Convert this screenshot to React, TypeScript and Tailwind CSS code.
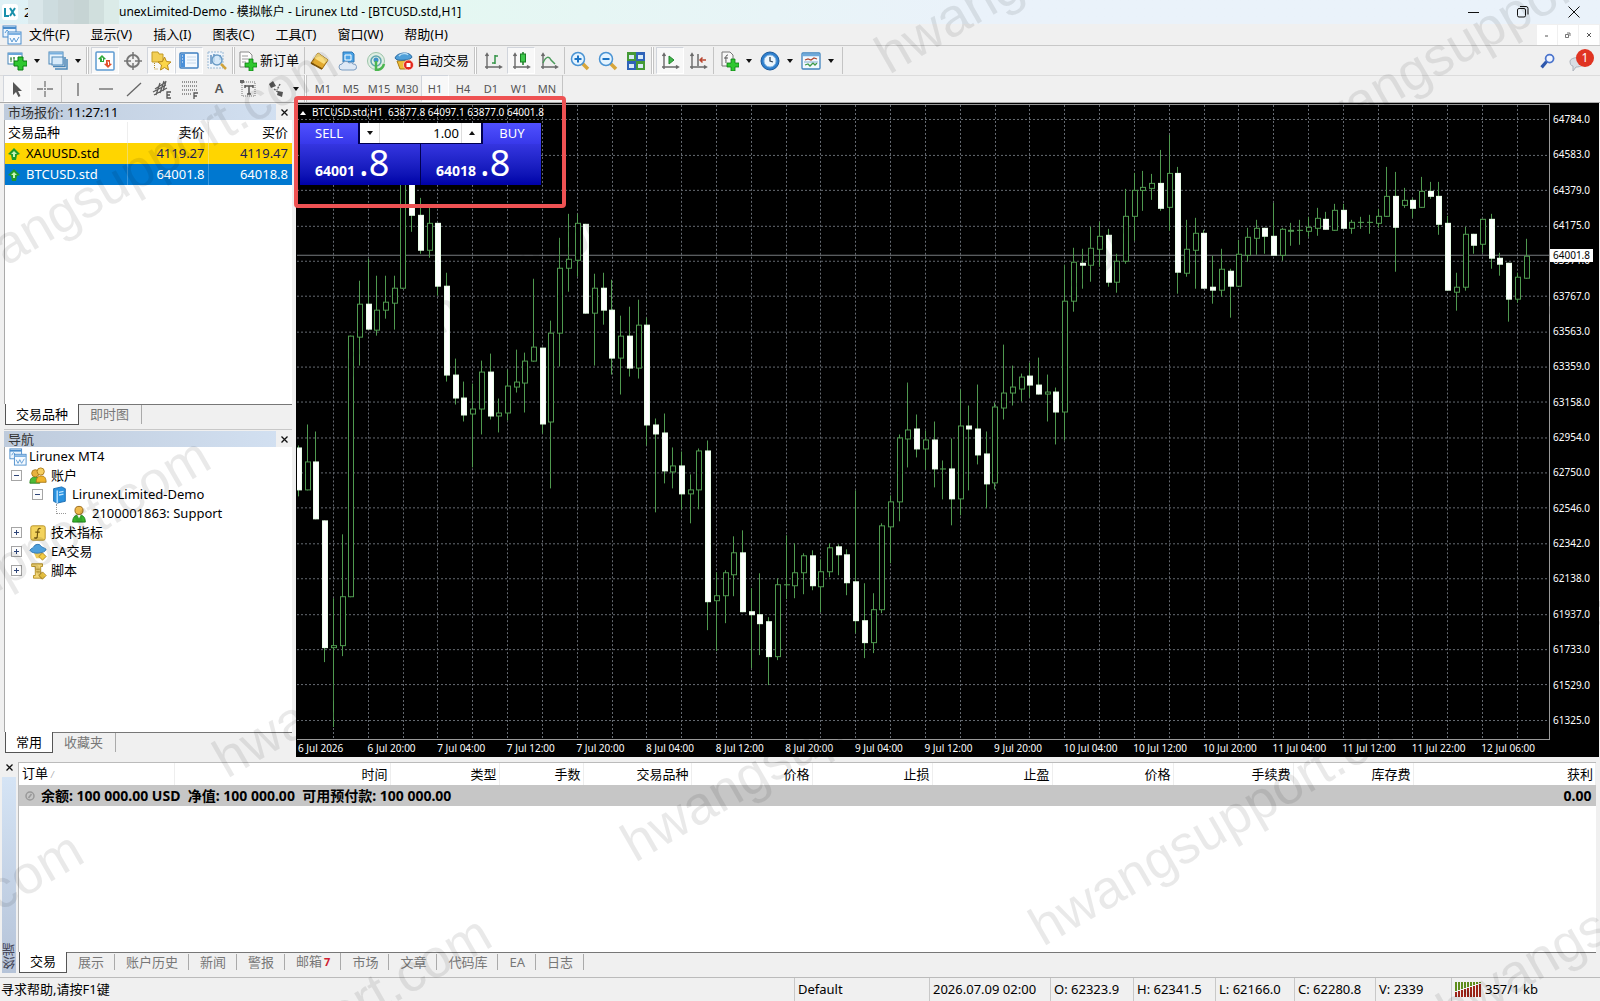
import { useState } from 'react';
import type { ReactNode } from 'react';

// [high, body top, body bottom, low, filled]
type Candle = [number, number, number, number, 0 | 1];

const candles: Candle[] = [
  [445, 447, 489, 495, 1], [424, 461, 489, 489, 0], [431, 461, 518, 518, 1], [520, 520, 647, 661, 1],
  [598, 645, 647, 726, 0], [534, 596, 645, 655, 0], [335, 335, 596, 596, 0], [280, 303, 336, 364, 0],
  [258, 303, 328, 328, 1], [275, 309, 329, 334, 0], [275, 301, 309, 317, 0], [275, 287, 302, 328, 0],
  [150, 150, 287, 287, 0], [150, 150, 214, 230, 1], [197, 214, 249, 252, 1], [205, 222, 249, 256, 0],
  [222, 222, 285, 294, 1], [272, 285, 374, 380, 1], [358, 374, 397, 403, 1], [381, 397, 414, 420, 1],
  [383, 408, 413, 466, 0], [360, 371, 408, 433, 0], [353, 371, 415, 418, 1], [398, 412, 415, 431, 0],
  [369, 385, 412, 419, 0], [349, 381, 386, 391, 0], [352, 360, 382, 411, 0], [278, 346, 360, 360, 0],
  [347, 347, 423, 432, 1], [320, 332, 421, 487, 0], [237, 267, 332, 365, 0], [213, 258, 267, 290, 0],
  [213, 222, 259, 275, 0], [223, 223, 312, 312, 1], [273, 287, 312, 364, 0], [272, 287, 309, 323, 1],
  [279, 309, 357, 373, 1], [315, 335, 357, 393, 0], [306, 335, 367, 375, 1], [299, 324, 367, 377, 0],
  [317, 324, 424, 444, 1], [418, 424, 433, 511, 1], [413, 432, 470, 482, 1], [447, 465, 471, 487, 0],
  [451, 465, 493, 508, 1], [474, 489, 493, 522, 0], [448, 450, 489, 508, 0], [440, 450, 601, 629, 1],
  [572, 595, 600, 650, 0], [570, 572, 595, 622, 0], [536, 552, 574, 595, 0], [530, 552, 611, 611, 1],
  [588, 611, 614, 667, 1], [573, 614, 623, 654, 1], [617, 621, 656, 684, 1], [578, 584, 656, 659, 0],
  [535, 584, 584, 598, 0], [543, 572, 585, 597, 0], [553, 555, 572, 593, 0], [550, 555, 585, 589, 1],
  [559, 571, 586, 611, 0], [543, 547, 571, 576, 0], [544, 546, 554, 574, 1], [549, 554, 582, 594, 1],
  [490, 581, 620, 632, 1], [583, 620, 642, 657, 1], [593, 609, 642, 652, 0], [523, 525, 609, 612, 0],
  [495, 501, 526, 562, 0], [434, 437, 501, 520, 0], [382, 429, 438, 466, 0], [414, 428, 448, 456, 1],
  [430, 439, 448, 468, 0], [421, 439, 468, 486, 1], [460, 468, 468, 498, 0], [438, 468, 498, 524, 1],
  [389, 425, 498, 514, 0], [405, 425, 428, 489, 1], [384, 428, 454, 463, 1], [431, 453, 483, 507, 1],
  [402, 406, 482, 488, 0], [344, 392, 407, 418, 0], [365, 386, 392, 404, 0], [373, 376, 388, 400, 0],
  [362, 375, 384, 396, 1], [357, 384, 393, 393, 1], [374, 391, 393, 420, 0], [387, 391, 411, 443, 1],
  [264, 300, 411, 439, 0], [247, 261, 300, 310, 0], [248, 262, 264, 287, 1], [226, 247, 264, 280, 0],
  [221, 235, 248, 265, 0], [228, 234, 281, 285, 1], [253, 260, 281, 291, 0], [188, 215, 260, 262, 0],
  [172, 189, 215, 239, 0], [170, 186, 189, 209, 0], [173, 182, 187, 198, 0], [149, 182, 207, 209, 1],
  [134, 172, 206, 229, 0], [166, 172, 271, 292, 1], [219, 248, 272, 275, 0], [217, 232, 249, 287, 0],
  [229, 232, 287, 287, 1], [255, 286, 289, 302, 1], [248, 268, 289, 295, 0], [268, 270, 285, 316, 1],
  [239, 253, 285, 285, 0], [227, 236, 254, 260, 0], [219, 227, 237, 253, 0], [227, 227, 235, 252, 1],
  [202, 235, 254, 254, 1], [227, 228, 254, 259, 0], [222, 229, 230, 244, 0], [219, 229, 229, 243, 0],
  [216, 226, 230, 235, 0], [207, 217, 227, 234, 0], [211, 218, 228, 228, 1], [203, 209, 229, 229, 0],
  [203, 209, 227, 227, 1], [219, 221, 227, 232, 0], [216, 221, 221, 227, 0], [214, 221, 221, 232, 0],
  [208, 215, 222, 226, 0], [166, 195, 215, 215, 0], [171, 195, 226, 270, 1], [187, 199, 204, 206, 0],
  [197, 199, 207, 216, 1], [176, 190, 206, 206, 0], [181, 190, 195, 197, 1], [181, 195, 223, 233, 1],
  [215, 222, 289, 289, 1], [272, 286, 291, 309, 0], [226, 233, 286, 289, 0], [233, 233, 244, 252, 1],
  [218, 218, 243, 251, 0], [213, 218, 257, 267, 1], [252, 257, 263, 274, 1], [262, 262, 298, 320, 1],
  [272, 276, 298, 301, 0], [238, 255, 277, 277, 0],
];

const prices = [
  '64784.0', '64583.0', '64379.0', '64175.0', '63971.0', '63767.0', '63563.0', '63359.0', '63158.0',
  '62954.0', '62750.0', '62546.0', '62342.0', '62138.0', '61937.0', '61733.0', '61529.0', '61325.0',
];

const dates = [
  '6 Jul 2026', '6 Jul 20:00', '7 Jul 04:00', '7 Jul 12:00', '7 Jul 20:00', '8 Jul 04:00', '8 Jul 12:00',
  '8 Jul 20:00', '9 Jul 04:00', '9 Jul 12:00', '9 Jul 20:00', '10 Jul 04:00', '10 Jul 12:00',
  '10 Jul 20:00', '11 Jul 04:00', '11 Jul 12:00', '11 Jul 22:00', '12 Jul 06:00',
];

const menus = ['文件(F)', '显示(V)', '插入(I)', '图表(C)', '工具(T)', '窗口(W)', '帮助(H)'];
const frames = ['M1', 'M5', 'M15', 'M30', 'H1', 'H4', 'D1', 'W1', 'MN'];
const terminalTabs = ['交易', '展示', '账户历史', '新闻', '警报', '邮箱', '市场', '文章', '代码库', 'EA', '日志'];

const orderColumns = [
  { label: '订单', width: 'w-[155px]' },
  { label: '时间', width: 'w-[216px]' },
  { label: '类型', width: 'w-[109px]' },
  { label: '手数', width: 'w-[84px]' },
  { label: '交易品种', width: 'w-[108px]' },
  { label: '价格', width: 'w-[121px]' },
  { label: '止损', width: 'w-[120px]' },
  { label: '止盈', width: 'w-[120px]' },
  { label: '价格', width: 'w-[121px]' },
  { label: '手续费', width: 'w-[120px]' },
  { label: '库存费', width: 'w-[120px]' },
  { label: '获利', width: '' },
];

function Icon({ children, size = 'h-5 w-5' }: { children: ReactNode; size?: string }) {
  return (
    <svg viewBox="0 0 20 20" className={`${size} shrink-0`} fill="none" aria-hidden="true">
      {children}
    </svg>
  );
}

function Plus() {
  return <path d="M12 8h4v4h4v4h-4v4h-4v-4H8v-4h4z" fill="#2fc72f" stroke="#0a7d12" strokeWidth="0.8" />;
}

function Axes() {
  return (
    <path
      d="M4 3v15M2 16h16M2.500 5 4 2.500 5.500 5M16 14.500l2.500 1.500-2.500 1.500"
      stroke="#6a6a6a"
      strokeWidth="1.400"
    />
  );
}

function WindowsIcon() {
  return (
    <Icon>
      <rect x="1" y="1" width="13" height="11" fill="#eaf4fd" stroke="#4a8ccb" />
      <path d="M1 3h13" stroke="#4a8ccb" strokeWidth="2" />
      <rect x="6" y="7" width="13" height="12" fill="#f5faff" stroke="#4a8ccb" />
      <path d="M6 9h13" stroke="#7cb1e2" strokeWidth="2" />
      <path d="m8 13 2 4 2-4 2 4 3-5M3 8l2-3 2 2" stroke="#5c9bd4" />
    </Icon>
  );
}

const icons: Record<string, ReactNode> = {
  newChart: (
    <Icon>
      <rect x="1" y="2" width="14" height="11" fill="#fff" stroke="#4a86b8" />
      <path d="M1 3h14" stroke="#69a5d8" strokeWidth="2" />
      <path d="M4 6v5M3 8h2M7 6v4M6 7h2" stroke="#398a3f" />
      <path d="M11 6h5v4h4v5h-4v4h-5v-4H7v-5h4z" fill="#2fc72f" stroke="#0a7d12" />
    </Icon>
  ),
  profiles: (
    <Icon>
      <rect x="1" y="1" width="14" height="12" fill="#e9f4fd" stroke="#4a86b8" />
      <path d="M1 2.500h14" stroke="#79b0de" strokeWidth="2" />
      <path d="M7 18h12V8M5 15.500h12V6" stroke="#4a86b8" strokeWidth="1.500" />
      <rect x="4" y="6" width="11" height="8" fill="#d8ebfa" stroke="#4a86b8" />
    </Icon>
  ),
  market: (
    <Icon>
      <rect x="1" y="1" width="18" height="18" rx="1" fill="#fdfeff" stroke="#5d9bd1" strokeWidth="1.500" />
      <path d="m7 4 4 4-2 .5V11H5V8.500L3 8z" fill="#2ea83a" />
      <path d="m13 17-4-4 2-.5V9h4v3.500l2 .5z" fill="#e2502c" />
      <path d="M6.500 7h1v3M12.500 11h1v3" stroke="#fff" />
    </Icon>
  ),
  target: (
    <Icon>
      <circle cx="10" cy="10" r="6" stroke="#777" strokeWidth="2" />
      <path d="M10 1v7M10 12v7M1 10h7M12 10h7" stroke="#777" strokeWidth="1.500" />
    </Icon>
  ),
  favorites: (
    <Icon>
      <path d="M1 3V1h6l1 2h4v8H1z" fill="#f3cf55" stroke="#c29b26" />
      <path d="M3.500 12v6h4" stroke="#b0881e" strokeDasharray="1 1" />
      <path d="m13.500 6 2 4.500 4.500.5-3.500 3 1 5-4-2.500-4 2.500 1-5L7 11l4.500-.5z" fill="#fcd648" stroke="#b8891a" />
    </Icon>
  ),
  navigator: (
    <Icon>
      <rect x="1" y="2" width="18" height="15" rx="1" fill="#f3f9ff" stroke="#3f7fc0" strokeWidth="1.500" />
      <rect x="2" y="3" width="4" height="13" fill="#4a90d9" />
      <path d="M3 5h1M3 8h1M3 11h1" stroke="#fff" />
      <path d="M8 6h9M8 9h9M8 12h9" stroke="#c6d8ea" />
    </Icon>
  ),
  tester: (
    <Icon>
      <rect x="1" y="1" width="15" height="16" fill="#eef5fc" stroke="#9ab8d3" strokeDasharray="2 1" />
      <path d="M4 4v9M7 3v8M13 4v5" stroke="#5f8fc0" strokeWidth="1.500" />
      <circle cx="10" cy="9" r="5" fill="#cfe6f8" fillOpacity="0.800" stroke="#6b9cc6" strokeWidth="1.500" />
      <path d="m14 13 5 5" stroke="#d1a33a" strokeWidth="2.500" />
    </Icon>
  ),
  order: (
    <Icon>
      <path d="M3 1h9l3 3v12H3z" fill="#fdfdfd" stroke="#8b8b8b" />
      <path d="M5 5h6M5 8h7M5 11h4" stroke="#9b9b9b" />
      <Plus />
    </Icon>
  ),
  gold: (
    <Icon>
      <path d="m8 2 10 7-6 9L1 12z" fill="#e2a92f" stroke="#9b6b12" />
      <path d="m8 2 10 7-4 4-10-6z" fill="#f9dc7d" />
      <path d="m1 12 11 6" stroke="#7d540a" strokeWidth="1.500" />
    </Icon>
  ),
  cloud: (
    <Icon>
      <path d="M5 1h9l2 2v8H5z" fill="#4ba3e6" stroke="#2c76b5" />
      <path d="M7 4h6v5H7z" stroke="#fff" />
      <path d="M4 19a3 3 0 0 1 0-6 4 4 0 0 1 7-1 3 3 0 0 1 4 1 3 3 0 0 1 1 6z" fill="#dfe9f5" stroke="#7b9cc0" />
    </Icon>
  ),
  signal: (
    <Icon>
      <circle cx="10" cy="10" r="8.500" fill="#dfeee3" stroke="#9cc4a9" />
      <circle cx="10" cy="10" r="5" stroke="#5fa5ac" strokeWidth="1.500" />
      <circle cx="10" cy="9" r="2.500" fill="#3f91c8" />
      <path d="M10 10v9c4 0 7-2 8-6" stroke="#4bb64f" strokeWidth="2.500" />
    </Icon>
  ),
  auto: (
    <Icon>
      <path d="m3 10 13-1-3 9H6z" fill="#edbd37" stroke="#a87b14" />
      <path d="M1 7c2-6 15-7 17-1 0 3-16 5-17 1z" fill="#4f9fd8" stroke="#2b6ba3" />
      <path d="M5 5c2-3 8-3 9-1" stroke="#b6dcf5" strokeWidth="1.500" />
      <circle cx="14.500" cy="14" r="5" fill="#e3281d" stroke="#fff" strokeWidth="0.600" />
      <rect x="12.500" y="12" width="4" height="4" fill="#fff" />
    </Icon>
  ),
  bars: (
    <Icon>
      <Axes />
      <path d="M12 4v9M12 5h3M9 12h3" stroke="#339447" strokeWidth="1.500" />
    </Icon>
  ),
  candle: (
    <Icon>
      <Axes />
      <path d="M12 1v13" stroke="#187d23" strokeWidth="1.500" />
      <rect x="9.500" y="3" width="5" height="8" fill="#3dc84b" stroke="#187d23" />
    </Icon>
  ),
  line: (
    <Icon>
      <Axes />
      <path d="M4 12c3-7 6-7 8-3l4 4" stroke="#4a9a5a" strokeWidth="1.500" />
    </Icon>
  ),
  zoomIn: (
    <Icon>
      <path d="m12 12 6 6" stroke="#d8a63a" strokeWidth="3.500" />
      <circle cx="8" cy="8" r="6.500" fill="#e5f4ff" stroke="#4a93d3" strokeWidth="1.500" />
      <path d="M4.500 8h7M8 4.500v7" stroke="#1c73c4" strokeWidth="2" />
    </Icon>
  ),
  zoomOut: (
    <Icon>
      <path d="m12 12 6 6" stroke="#d8a63a" strokeWidth="3.500" />
      <circle cx="8" cy="8" r="6.500" fill="#e5f4ff" stroke="#4a93d3" strokeWidth="1.500" />
      <path d="M4.500 8h7" stroke="#1c73c4" strokeWidth="2" />
    </Icon>
  ),
  tile: (
    <Icon>
      <path d="M1 1h9v9H1zM10 10h9v9h-9z" fill="#459a36" />
      <path d="M10 1h9v9h-9zM1 10h9v9H1z" fill="#2f63b8" />
      <path d="M3 4h5v4H3zM12 4h5v4h-5zM3 13h5v4H3zM12 13h5v4h-5z" fill="#d7ebf7" />
    </Icon>
  ),
  scroll: (
    <Icon>
      <Axes />
      <path d="m9 5 5 4-5 4z" fill="#3fb54a" stroke="#23852d" />
    </Icon>
  ),
  shift: (
    <Icon>
      <Axes />
      <path d="M10 3v12" stroke="#6a6a6a" strokeWidth="1.500" />
      <path d="M18 9h-6M14.500 6.500 12 9l2.500 2.500" stroke="#b9452f" strokeWidth="1.500" />
    </Icon>
  ),
  indicators: (
    <Icon>
      <path d="M3 1h8l3 3v11H3z" fill="#f7f7f7" stroke="#777" />
      <path d="M9 4c-3 0-2 3-2 8M5 7h4" stroke="#555" />
      <Plus />
    </Icon>
  ),
  clock: (
    <Icon>
      <circle cx="10" cy="10" r="9" fill="#2e7fce" stroke="#1b5a9b" />
      <circle cx="10" cy="10" r="6" fill="#edf6fd" stroke="#8bbbe3" />
      <path d="M10 6v4l3 1" stroke="#345" strokeWidth="1.300" />
    </Icon>
  ),
  template: (
    <Icon>
      <rect x="1" y="2" width="18" height="16" rx="1" fill="#f2f9ff" stroke="#3f83bd" strokeWidth="1.300" />
      <path d="M1 4h18" stroke="#6faadb" strokeWidth="2.500" />
      <path d="m4 9 3-1 3 1 3-2 3 1" stroke="#b0472f" strokeWidth="1.300" />
      <path d="m4 14 3-1 2 2 3-3 2 2 2-2" stroke="#3f9a4c" strokeWidth="1.300" />
      <path d="M3 11h14" stroke="#86afd1" />
    </Icon>
  ),
  pointer: (
    <Icon>
      <path d="M6 3v13l3-3 2.500 5 2-1-2.500-5h4z" fill="#555" />
    </Icon>
  ),
  cross: (
    <Icon>
      <path d="M10 2v6M10 12v6M2 10h6M12 10h6M9 10h2" stroke="#777" strokeWidth="1.300" />
    </Icon>
  ),
  vline: (
    <Icon>
      <path d="M10 4v13" stroke="#666" strokeWidth="1.300" />
    </Icon>
  ),
  hline: (
    <Icon>
      <path d="M3 10h14" stroke="#666" strokeWidth="1.300" />
    </Icon>
  ),
  trend: (
    <Icon>
      <path d="M3 17 17 4" stroke="#666" strokeWidth="1.300" />
    </Icon>
  ),
  channel: (
    <Icon>
      <path d="m1 13 13-7M2 16l13-7M3 10l11-7M4 16 8 4M8 14l4-12M11 12l3-10" stroke="#5c5c5c" strokeWidth="1.300" />
      <path d="M19 13h-4v6h4M15 16h3" stroke="#555" strokeWidth="1.300" />
    </Icon>
  ),
  fibo: (
    <Icon>
      <path d="M2 3h15M2 7h15M2 11h15M2 15h9" stroke="#777" strokeDasharray="1 1" strokeWidth="1.300" />
      <path d="M14 20v-6h4M14 17h3" stroke="#555" strokeWidth="1.300" />
    </Icon>
  ),
  label: (
    <Icon>
      <rect x="4" y="3" width="13" height="14" stroke="#777" strokeDasharray="1 1" />
      <path d="M7 7h8M11 7v8M7 6v3M15 6v3M9 15h4" stroke="#555" strokeWidth="1.500" />
      <path d="M2 1h4v3H2z" fill="#666" />
    </Icon>
  ),
  arrows: (
    <Icon>
      <path d="M3 5 7 2l3 5-5 2zM12 12l5 1-1 5-5-2z" fill="#555" />
      <path d="m8 10 4 3M14 5l-3 6" stroke="#666" strokeDasharray="2 1" strokeWidth="1.500" />
    </Icon>
  ),
};

function Tool({ name, label, active = false }: { name: string; label: string; active?: boolean }) {
  return (
    <button
      aria-label={label}
      className={`flex h-[27px] w-7 shrink-0 items-center justify-center ${
        active ? 'border border-gray-300 border-r-white border-b-white bg-[#f8f8f8]' : ''
      }`}
    >
      {icons[name]}
    </button>
  );
}

function Drop({ label }: { label: string }) {
  return (
    <button aria-label={label} className="mr-0.5 flex h-[27px] w-[11px] shrink-0 items-center justify-center">
      <svg viewBox="0 0 6 4" className="h-1 w-1.5" aria-hidden="true">
        <path d="M0 0h6L3 4z" fill="#111" />
      </svg>
    </button>
  );
}

function Sep() {
  return <span className="mx-px h-[27px] w-px shrink-0 bg-[#c4c4c4]" />;
}

function Grip() {
  return <span className="mr-0.5 ml-px h-[27px] w-[3px] shrink-0 border-x border-[#c4c4c4] bg-white" />;
}

function TitleBar() {
  return (
    <header className="flex h-6 items-center bg-linear-to-r from-[#dff1f6] via-[#e4f8f1] via-25% to-[#eaf2fa] to-60%">
      <svg viewBox="0 0 16 16" className="ml-0.5 h-4 w-4" aria-hidden="true">
        <rect width="16" height="16" rx="3" fill="#fff" />
        <path d="M3 4v8h4M8 4l5 8M13 4l-5 8" stroke="#1a90ab" strokeWidth="2" fill="none" />
      </svg>
      <span className="ml-1.5 w-1 overflow-hidden">2</span>
      <span className="grid h-6 w-[91px] grid-cols-6">
        <span className="bg-[#d9e6e9]" />
        <span className="bg-[#cddcdf]" />
        <span className="bg-[#c9d6d8]" />
        <span className="bg-[#c6d4d4]" />
        <span className="bg-[#d0dfdd]" />
        <span className="bg-[#dbebe8]" />
      </span>
      <h1 className="text-xs whitespace-pre">unexLimited-Demo - 模拟帐户 - Lirunex Ltd - [BTCUSD.std,H1]</h1>
      <div className="ml-auto flex">
        <button aria-label="最小化" className="flex h-6 w-[50px] items-center justify-center">
          <svg viewBox="0 0 12 12" className="h-3 w-3" stroke="#111" fill="none">
            <path d="M1 6.500h11" />
          </svg>
        </button>
        <button aria-label="还原" className="flex h-6 w-[50px] items-center justify-center">
          <svg viewBox="0 0 12 12" className="h-3 w-3" stroke="#111" fill="none">
            <rect x="0.500" y="2.500" width="8" height="8.500" rx="1.500" />
            <path d="M3 .5h6a2 2 0 0 1 2 2v6" />
          </svg>
        </button>
        <button aria-label="关闭" className="flex h-6 w-[52px] items-center justify-center">
          <svg viewBox="0 0 12 12" className="h-3 w-3" stroke="#111" fill="none">
            <path d="m.5.5 11 11M11.500.5l-11 11" />
          </svg>
        </button>
      </div>
    </header>
  );
}

function MenuBar() {
  return (
    <nav className="flex h-[22px] items-center border-b border-[#c8c8c8] pl-0.5">
      <WindowsIcon />
      <div className="ml-[7px] flex gap-[21px]">
        {menus.map((menu) => (
          <button key={menu}>{menu}</button>
        ))}
      </div>
      <div className="ml-auto flex gap-px pr-px">
        <button aria-label="最小化图表" className="flex h-5 w-5 items-center justify-center bg-white text-[#555]">
          <svg viewBox="0 0 6 6" className="h-1.5 w-1.5" stroke="currentColor"><path d="M1 4h3" /></svg>
        </button>
        <button aria-label="还原图表" className="flex h-5 w-5 items-center justify-center bg-white text-[#555]">
          <svg viewBox="0 0 6 6" className="h-1.5 w-1.5" stroke="currentColor" fill="none" strokeWidth="0.800">
            <path d="M.5 2.500h3v3h-3zM2 1h3v3" />
          </svg>
        </button>
        <button aria-label="关闭图表" className="flex h-5 w-5 items-center justify-center bg-white text-[#555]">
          <svg viewBox="0 0 6 6" className="h-1.5 w-1.5" stroke="currentColor"><path d="m1 1 4 4M5 1 1 5" /></svg>
        </button>
      </div>
    </nav>
  );
}

function Toolbars() {
  const [frame, setFrame] = useState('H1');

  return (
    <div className="border-b border-[#aaa] pb-px">
      <div className="flex h-[29px] items-center pl-[3px]">
        <Tool name="newChart" label="新图表" />
        <Drop label="新图表选项" />
        <Tool name="profiles" label="配置文件" />
        <Drop label="配置文件选项" />
        <Grip />
        <Tool name="market" label="市场报价" active />
        <Tool name="target" label="数据窗口" />
        <Tool name="favorites" label="导航" active />
        <Tool name="navigator" label="终端" active />
        <Tool name="tester" label="策略测试" />
        <Grip />
        <button className="flex h-[27px] items-center gap-[3px] whitespace-nowrap pr-1">
          {icons.order}
          新订单
        </button>
        <Sep />
        <Tool name="gold" label="MetaEditor" />
        <Tool name="cloud" label="VPS" />
        <Tool name="signal" label="信号" />
        <button className="flex h-[27px] items-center gap-[3px] whitespace-nowrap px-1">
          {icons.auto}
          自动交易
        </button>
        <Grip />
        <Tool name="bars" label="柱状图" />
        <Tool name="candle" label="蜡烛图" active />
        <Tool name="line" label="折线图" />
        <Sep />
        <Tool name="zoomIn" label="放大" />
        <Tool name="zoomOut" label="缩小" />
        <Tool name="tile" label="平铺窗口" />
        <Grip />
        <Tool name="scroll" label="自动滚动" active />
        <Tool name="shift" label="图表平移" />
        <Sep />
        <Tool name="indicators" label="技术指标" />
        <Drop label="技术指标选项" />
        <Tool name="clock" label="时间周期" />
        <Drop label="时间周期选项" />
        <Tool name="template" label="模板" />
        <Drop label="模板选项" />
        <span className="ml-1 h-[27px] w-px bg-[#c4c4c4]" />
        <div className="ml-auto flex items-center gap-3 pr-1.5">
          <button aria-label="搜索">
            <Icon size="h-4 w-4">
              <circle cx="12" cy="7" r="5" stroke="#4b74cc" strokeWidth="2.200" fill="#f0f5ff" />
              <path d="m8 11-6 7" stroke="#2d57ac" strokeWidth="4" />
            </Icon>
          </button>
          <button className="relative h-6 w-[26px]" aria-label="1 条消息">
            <svg viewBox="0 0 26 24" className="h-6 w-[26px]" fill="#d9dde3" stroke="#adb3bc">
              <path d="M2 12c1-4 12-5 14 0 0 4-3 6-8 6l-3 4v-5c-2 0-3-2-3-5z" />
            </svg>
            <span className="absolute top-0 right-0 h-[18px] w-[18px] rounded-full bg-[#e03422] text-center text-xs leading-[18px] text-white">
              1
            </span>
          </button>
        </div>
      </div>
      <div className="flex h-[26px] items-center border-t border-[#dcdcdc] pl-[3px]">
        <Tool name="pointer" label="光标" active />
        <Tool name="cross" label="十字线" />
        <span className="mx-0.5 h-[27px] w-px bg-[#c4c4c4]" />
        <Tool name="vline" label="垂直线" />
        <Tool name="hline" label="水平线" />
        <Tool name="trend" label="趋势线" />
        <Tool name="channel" label="等距通道" />
        <Tool name="fibo" label="斐波那契" />
        <button className="h-[27px] w-[30px] text-[#555] [font-weight:600]">A</button>
        <Tool name="label" label="文字标签" />
        <Tool name="arrows" label="箭头" />
        <Drop label="箭头选项" />
        <Grip />
        {frames.map((item) => (
          <button
            key={item}
            onClick={() => setFrame(item)}
            className={`h-[27px] w-7 shrink-0 text-[11px] text-[#555] ${
              item === frame ? 'border border-gray-300 border-r-white border-b-white bg-[#f8f8f8]' : ''
            }`}
          >
            {item}
          </button>
        ))}
        <Sep />
      </div>
    </div>
  );
}

function PanelHeader({ children }: { children: ReactNode }) {
  return (
    <div className="flex h-4 items-center bg-linear-to-r from-[#becbdc] to-[#d3e1f2] pl-1 leading-4 text-[#333]">
      <span className="flex-1">{children}</span>
      <button aria-label="关闭面板" className="flex h-4 w-4 items-center justify-center bg-[#f0f0f0]">
        <svg viewBox="0 0 7 7" className="h-[7px] w-[7px]" stroke="#111" strokeWidth="1.300">
          <path d="m.5.5 6 6M6.500.5l-6 6" />
        </svg>
      </button>
    </div>
  );
}

function PanelTabs({ tabs }: { tabs: string[] }) {
  return (
    <div className="flex h-[21px] text-[#777]">
      {tabs.map((tab, i) =>
        i === 0 ? (
          <button key={tab} className="ml-px border border-t-0 border-[#555] bg-white px-2.5 text-black">
            {tab}
          </button>
        ) : (
          <button key={tab} className="border-t border-[#777] pb-px pl-[11px]">
            <span className="block border-r border-[#aaa] pr-3">{tab}</span>
          </button>
        ),
      )}
      <span className="flex-1 border-t border-[#777]" />
    </div>
  );
}

function UpArrow() {
  return (
    <svg viewBox="0 0 12 12" className="h-3 w-3 shrink-0" aria-hidden="true">
      <path d="m6 0 6 6-3 1-1 5H4L3 7 0 6z" fill="#1f9b2b" />
      <path d="m6 3 3 3H7v3H5V6H3z" fill="#c8f5b6" />
    </svg>
  );
}

function MarketWatch() {
  return (
    <section className="flex h-[326px] flex-col">
      <PanelHeader>
        市场报价: <span className="text-black">11:27:11</span>
      </PanelHeader>
      <div className="flex-1 border-l border-[#aaa] bg-white pt-0.5">
        <table className="w-full table-fixed">
          <thead>
            <tr className="h-[21px]">
              <th className="w-[122px] border-r border-[#eee] pl-[3px] text-left font-normal">交易品种</th>
              <th className="w-[81px] border-r border-[#eee] pr-[3px] text-right font-normal">卖价</th>
              <th className="pr-1 text-right font-normal">买价</th>
            </tr>
          </thead>
          <tbody>
            <tr className="h-[21px] bg-[#ffd500] text-[#222255]">
              <td className="border-r border-[#f2dc60] pl-[3px] text-black">
                <span className="flex items-center gap-1.5"><UpArrow />XAUUSD.std</span>
              </td>
              <td className="border-r border-[#f2dc60] pr-[3px] text-right">4119.27</td>
              <td className="pr-1 text-right">4119.47</td>
            </tr>
            <tr className="h-[21px] bg-[#0078d0] text-white">
              <td className="border-r border-[#3a97dd] pl-[3px]">
                <span className="flex items-center gap-1.5"><UpArrow />BTCUSD.std</span>
              </td>
              <td className="border-r border-[#3a97dd] pr-[3px] text-right">64001.8</td>
              <td className="pr-1 text-right">64018.8</td>
            </tr>
          </tbody>
        </table>
      </div>
      <PanelTabs tabs={['交易品种', '即时图']} />
      <div className="h-[5px] border-b border-[#c8c8c8]" />
    </section>
  );
}

function Expander({ open = false }: { open?: boolean }) {
  return (
    <svg viewBox="0 0 11 11" className="h-[11px] w-[11px] shrink-0" aria-hidden="true">
      <rect x="0.500" y="0.500" width="10" height="10" fill="#fcfcfc" stroke="#a5a5a5" />
      <path d={open ? 'M3 5.500h5' : 'M3 5.500h5M5.500 3v5'} stroke="#2d4478" />
    </svg>
  );
}

const treeIcons = {
  users: (
    <Icon>
      <path d="M1 18c0-6 3-7 6-7s5 2 5 7z" fill="#4dbb36" stroke="#2c8220" />
      <circle cx="7" cy="7" r="4" fill="#e7b13f" stroke="#a97816" />
      <path d="M8 17c0-6 3-7 6-7s5 2 5 7z" fill="#f0b52c" stroke="#a97816" />
      <circle cx="13" cy="5" r="4" fill="#f6cf60" stroke="#a97816" />
    </Icon>
  ),
  server: (
    <Icon>
      <path d="m4 3 9-2 4 2v14l-9 2-4-2z" fill="#2992e0" stroke="#1668ad" />
      <path d="M8 5v14M10 7l5-1M10 10l5-1" stroke="#bce3ff" strokeWidth="1.500" />
    </Icon>
  ),
  user: (
    <Icon>
      <path d="M3 19c0-6 3-8 7-8s7 2 7 8z" fill="#38b52e" stroke="#1c7c18" />
      <path d="m8 11 2 4 2-4" fill="#fff" />
      <circle cx="10" cy="6" r="4.500" fill="#eeb94c" stroke="#94651a" />
    </Icon>
  ),
  indicator: (
    <Icon>
      <rect x="2" y="2" width="16" height="16" rx="2" fill="#f3d35d" stroke="#b38d20" />
      <path d="M13 5c-4-1-3 3-4 10-1 1-2 1-3 0M7 9h5" stroke="#6d520d" strokeWidth="1.300" />
    </Icon>
  ),
  expert: (
    <Icon>
      <path d="M5 10h10l-3 7H8z" fill="#edca58" />
      <path d="M1 8c2-3 4-2 5-5 2-2 6-2 7 0 1 2 4 2 6 4-1 5-16 6-18 1z" fill="#4fa0dc" stroke="#2f75b0" />
      <path d="m15 11 4 4-4 4-4-4z" fill="#f4cd45" stroke="#a87e15" />
    </Icon>
  ),
  script: (
    <Icon>
      <path d="M3 2h12v3h-2v10h2v3H5v-3h2V5H3z" fill="#f3d675" stroke="#b38d20" />
      <path d="M8 8h4M8 11h4" stroke="#b38d20" />
      <path d="m15 11 4 4-4 4-4-4z" fill="#f4cd45" stroke="#a87e15" />
    </Icon>
  ),
};

function Navigator() {
  return (
    <section className="flex flex-1 flex-col pt-px">
      <PanelHeader>导航</PanelHeader>
      <div className="flex-1 border-l border-[#aaa] bg-white">
        <ul className="pl-[3px] [&_li]:flex [&_li]:h-[19px] [&_li]:items-center [&_li]:whitespace-nowrap [&_svg]:max-h-[18px]">
          <li className="gap-px">
            <WindowsIcon />
            Lirunex MT4
          </li>
          <li className="gap-1.5 pl-[3px]">
            <Expander open />
            <span className="flex items-center gap-[3px]">{treeIcons.users}账户</span>
          </li>
          <li className="gap-1.5 pl-6">
            <Expander open />
            <span className="flex items-center gap-[3px]">{treeIcons.server}LirunexLimited-Demo</span>
          </li>
          <li className="gap-[3px] pl-12">
            <span className="h-2.5 w-2.5 self-start border-b border-l border-dotted border-[#999]" />
            {treeIcons.user}2100001863: Support
          </li>
          <li className="gap-1.5 pl-[3px]">
            <Expander />
            <span className="flex items-center gap-[3px]">{treeIcons.indicator}技术指标</span>
          </li>
          <li className="gap-1.5 pl-[3px]">
            <Expander />
            <span className="flex items-center gap-[3px]">{treeIcons.expert}EA交易</span>
          </li>
          <li className="gap-1.5 pl-[3px]">
            <Expander />
            <span className="flex items-center gap-[3px]">{treeIcons.script}脚本</span>
          </li>
        </ul>
      </div>
      <PanelTabs tabs={['常用', '收藏夹']} />
      <div className="h-1" />
    </section>
  );
}

function TradePanel() {
  const [volume, setVolume] = useState('1.00');

  return (
    <div className="absolute top-0.5 left-1">
      <p className="flex h-[15px] items-center gap-1.5 text-[10px] whitespace-pre text-white">
        <svg viewBox="0 0 6 4" className="h-1 w-1.5" aria-hidden="true"><path d="M0 4h6L3 0z" fill="#fff" /></svg>
        BTCUSD.std,H1  63877.8 64097.1 63877.0 64001.8
      </p>
      <div className="mt-[3px] grid w-[241px] grid-cols-2 gap-x-px bg-[#000050] text-[13px]">
        <div className="col-span-2 flex h-[21px] gap-0.5">
          <button className="w-[58px] bg-linear-to-b from-[#5050ff] to-[#3838ea] text-white">SELL</button>
          <div className="mb-px flex flex-1 bg-white">
            <button aria-label="减少手数" className="flex w-5 items-center justify-center border-r border-[#ddd]">
              <svg viewBox="0 0 6 4" className="h-1 w-1.5"><path d="M0 0h6L3 4z" fill="#111" /></svg>
            </button>
            <input
              aria-label="手数"
              value={volume}
              onChange={(e) => setVolume(e.target.value)}
              className="w-0 flex-1 pr-0.5 text-right text-black outline-none"
            />
            <button aria-label="增加手数" className="flex w-5 items-center justify-center border-l border-[#ddd]">
              <svg viewBox="0 0 6 4" className="h-1 w-1.5"><path d="M0 4h6L3 0z" fill="#111" /></svg>
            </button>
          </div>
          <button className="w-[58px] bg-linear-to-b from-[#5050ff] to-[#3838ea] text-white">BUY</button>
        </div>
        {['64001', '64018'].map((price) => (
          <button
            key={price}
            className="flex h-[41px] items-baseline gap-1 bg-linear-to-b from-[#3535e0] to-[#0000a8] pl-[15px] text-white"
          >
            <span className="text-sm leading-[41px] font-bold">{price}</span>
            <span className="text-4xl leading-[37px]">.8</span>
          </button>
        ))}
      </div>
    </div>
  );
}

function Chart() {
  return (
    <main className="relative flex min-w-0 flex-1 flex-col bg-black text-[10px] text-white">
      <div className="flex flex-1 pt-px pl-px">
        <svg
          viewBox="297 104 1252 635"
          preserveAspectRatio="none"
          className="h-0 min-h-full w-0 flex-1 border-t border-r border-b border-[#999]"
          shapeRendering="crispEdges"
          aria-label="BTCUSD.std H1"
        >
          <g stroke="#666b72" strokeDasharray="2 2">
            {prices.map((price, i) => (
              <path key={price} d={`M297 ${Math.round(118.4 + i * 35.37) + 0.5}h1252`} />
            ))}
            {Array.from({ length: 35 }, (_, i) => (
              <path key={i} d={`M${Math.round(333 + i * 34.82) + 0.5} 104v635`} />
            ))}
          </g>
          <path d="M297 254.5h1252" stroke="#777b80" />
          {candles.map(([high, top, bottom, low, filled], i) => {
            const x = Math.round(298 + i * 8.706) + 0.5;
            return (
              <g key={i} stroke="#4f9a4f">
                <path d={`M${x} ${high}V${low + 1}`} />
                <rect
                  x={x - 2}
                  y={top + 0.5}
                  width="5"
                  height={Math.max(bottom - top, 0.1)}
                  fill={filled ? '#fff' : '#000'}
                  stroke={filled ? '#e9ffe9' : '#4f9a4f'}
                />
              </g>
            );
          })}
        </svg>
        <div className="relative flex w-[49px] flex-col justify-between pt-2 pb-[13px] pl-[3px]">
          {prices.map((price) => (
            <span key={price} className="leading-[14px]">{price}</span>
          ))}
          <span className="absolute top-[145px] left-0 w-[43px] bg-white pl-[3px] leading-[13px] text-black">64001.8</span>
        </div>
      </div>
      <div className="flex h-[17px] pr-12 pl-0.5 leading-4">
        {dates.map((date) => (
          <span key={date} className="w-0 flex-1 whitespace-nowrap">{date}</span>
        ))}
      </div>
      <TradePanel />
      <div className="pointer-events-none absolute -top-[7px] -left-0.5 h-[112px] w-[272px] rounded-sm border-4 border-[#ee5253]" />
    </main>
  );
}

function Terminal() {
  return (
    <section className="flex h-[220px]">
      <div className="flex w-[18px] flex-col items-center pt-0.5 pb-1">
        <button aria-label="关闭终端" className="mb-0.5 flex h-4 w-4 items-center justify-center">
          <svg viewBox="0 0 7 7" className="h-[7px] w-[7px]" stroke="#111" strokeWidth="1.300">
            <path d="m.5.5 6 6M6.500.5l-6 6" />
          </svg>
        </button>
        <div className="flex w-3.5 flex-1 items-center bg-linear-to-b from-[#d5e4f5] to-[#b5c3d8] text-[#445]">
          <span className="rotate-180 self-stretch pt-1 text-left leading-[14px] [writing-mode:vertical-rl]">终端</span>
        </div>
      </div>
      <div className="flex min-w-0 flex-1 flex-col pt-[5px] pr-1">
        <div className="flex-1 border-t border-l border-[#bbb] bg-white">
          <table className="w-full table-fixed">
            <thead>
              <tr className="h-[22px]">
                {orderColumns.map(({ label, width }, i) => (
                  <th
                    key={i}
                    className={`border-r border-[#eee] font-normal ${width} ${
                      i === 0 ? 'pl-[3px] text-left' : 'pr-0.5 text-right'
                    }`}
                  >
                    {label}
                    {i === 0 && <span className="ml-1 align-middle text-[8px] text-[#999]">⁄</span>}
                  </th>
                ))}
              </tr>
            </thead>
            <tbody>
              <tr className="h-[21px] bg-[#c6c6c6] text-sm leading-[19px] font-bold">
                <td colSpan={11} className="pl-1.5 whitespace-pre">
                  <span className="flex items-center gap-1.5">
                    <svg viewBox="0 0 10 10" className="h-2.5 w-2.5" fill="none" stroke="#999" strokeWidth="1.500">
                      <circle cx="5" cy="5" r="4" />
                      <path d="M3.500 7 6.500 3" />
                    </svg>
                    余额: 100 000.00 USD  净值: 100 000.00  可用预付款: 100 000.00
                  </span>
                </td>
                <td className="pr-1 text-right">0.00</td>
              </tr>
            </tbody>
          </table>
        </div>
        <div className="flex h-[21px] text-[#777]">
          {terminalTabs.map((tab, i) =>
            i === 0 ? (
              <button key={tab} className="ml-px border border-t-0 border-[#555] bg-white px-2.5 pb-px text-black">
                {tab}
              </button>
            ) : (
              <button key={tab} className="border-t border-[#777] pb-[3px] pl-[11px]">
                <span className="block border-r border-[#aaa] pr-2.5 leading-4">
                  {tab}
                  {tab === '邮箱' && <span className="ml-0.5 text-[11px] font-bold text-[#d02030]">7</span>}
                </span>
              </button>
            ),
          )}
          <span className="flex-1 border-t border-[#777]" />
        </div>
        <div className="h-1" />
      </div>
    </section>
  );
}

function StatusBar() {
  const cell = 'flex h-full items-center border-l border-[#c8c8c8] pl-[3px] whitespace-nowrap';

  return (
    <footer className="flex h-6 items-center border-t border-[#bbb]">
      <span className="flex-1 pl-px">寻求帮助,请按F1键</span>
      <span className={`${cell} w-[135px]`}>Default</span>
      <span className={`${cell} w-[121px]`}>2026.07.09 02:00</span>
      <span className={`${cell} w-[83px]`}>O: 62323.9</span>
      <span className={`${cell} w-[82px]`}>H: 62341.5</span>
      <span className={`${cell} w-[79px]`}>L: 62166.0</span>
      <span className={`${cell} w-[81px]`}>C: 62280.8</span>
      <span className={`${cell} w-[76px]`}>V: 2339</span>
      <span className={`${cell} w-[149px] gap-1`}>
        <svg viewBox="0 0 26 15" className="h-[15px] w-[26px]" aria-hidden="true">
          {Array.from({ length: 9 }, (_, i) => (
            <g key={i}>
              <path d={`M${1 + i * 3} 0v${9 - i}`} stroke="#5e8c1b" strokeWidth="2" />
              <path d={`M${1 + i * 3} ${10 - i}V15`} stroke="#9c2418" strokeWidth="2" />
            </g>
          ))}
        </svg>
        357/1 kb
      </span>
    </footer>
  );
}

const marks = [
  [104, 1173], [-304, 1089], [1047, 947], [639, 863], [231, 779], [-177, 695], [1455, 1031],
  [1174, 553], [766, 469], [358, 385], [-50, 301], [1582, 637], [1301, 159], [893, 75], [485, -9],
];

function Watermark() {
  return (
    <svg
      viewBox="4 0 1600 1001"
      preserveAspectRatio="xMinYMin slice"
      className="pointer-events-none absolute inset-0 h-full w-full font-['Liberation_Sans',sans-serif] text-[54px]"
      aria-hidden="true"
    >
      {marks.map(([x, y]) => (
        <text key={`${x},${y}`} transform={`translate(${x} ${y}) rotate(-30)`} fill="#000" fillOpacity="0.085">
          hwangsupport.com
        </text>
      ))}
    </svg>
  );
}

export default function App() {
  return (
    <div className="relative flex min-h-screen flex-col overflow-hidden bg-[#f0f0f0] font-['Noto_Sans','Noto_Sans_CJK_SC',sans-serif] text-[13px] leading-[19px] text-black">
      <TitleBar />
      <MenuBar />
      <Toolbars />
      <div className="flex flex-1">
        <aside className="flex w-[296px] shrink-0 flex-col pt-px pr-1 pl-1">
          <MarketWatch />
          <Navigator />
        </aside>
        <Chart />
        <div className="w-px" />
      </div>
      <Terminal />
      <StatusBar />
      <Watermark />
    </div>
  );
}
